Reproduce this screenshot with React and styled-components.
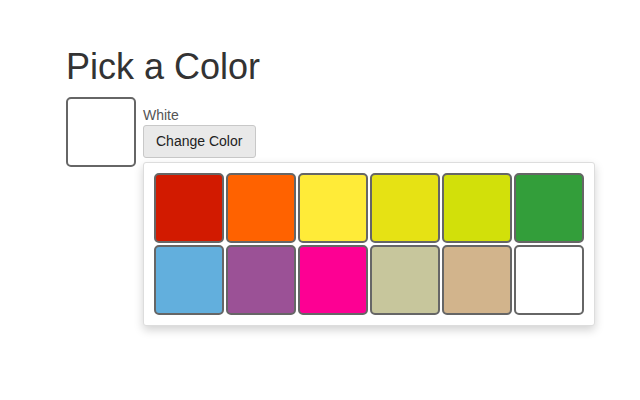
import React from "react";
import styled, { createGlobalStyle } from "styled-components";

const Global = createGlobalStyle`
  html, body { margin: 0; padding: 0; background: #fff; }
  body { font-family: "Liberation Sans", Arial, sans-serif; color: #333; min-height: 400px; }
`;

const Page = styled.div`
  padding: 46px 0 0 66px;
`;

const Title = styled.h1`
  margin: 0;
  font-size: 36px;
  font-weight: 400;
  line-height: 41px;
  color: #333;
`;

const Row = styled.div`
  display: flex;
  align-items: flex-start;
  gap: 7px;
  margin-top: 10px;
`;

const Preview = styled.div`
  width: 66px;
  height: 66px;
  border: 2px solid #666;
  border-radius: 5px;
  background: ${(p) => p.$color};
  flex: none;
`;

const Side = styled.div`
  display: flex;
  flex-direction: column;
  align-items: flex-start;
  padding-top: 10px;
`;

const Label = styled.div`
  font-size: 14px;
  line-height: 16px;
  color: #555;
  margin-bottom: 2px;
`;

const Button = styled.button`
  font-family: "Liberation Sans", Arial, sans-serif;
  font-size: 14px;
  line-height: 17px;
  color: #222;
  background: #e9e9e9;
  border: 1px solid #c8c8c8;
  border-radius: 3px;
  padding: 7px 13px 7px 12px;
  cursor: pointer;
`;

const Popover = styled.div`
  margin-top: 4px;
  background: #fff;
  border: 1px solid #ddd;
  border-radius: 3px;
  box-shadow: 0 4px 10px rgba(0, 0, 0, 0.18);
  padding: 10px;
  display: grid;
  grid-template-columns: repeat(6, 70px);
  gap: 2px;
`;

const Swatch = styled.div`
  width: 66px;
  height: 66px;
  border: 2px solid #666;
  border-radius: 5px;
  background: ${(p) => p.$color};
`;

const colors = [
  "#d21a00",
  "#ff6200",
  "#ffeb38",
  "#e6e214",
  "#d2e00a",
  "#339e3a",
  "#62afdd",
  "#9b5196",
  "#fd0093",
  "#c7c69c",
  "#d2b48c",
  "#ffffff",
];

export default function App() {
  return (
    <>
      <Global />
      <Page>
        <Title>Pick a Color</Title>
        <Row>
          <Preview $color="#ffffff" />
          <Side>
            <Label>White</Label>
            <Button>Change Color</Button>
            <Popover>
              {colors.map((c) => (
                <Swatch key={c} $color={c} />
              ))}
            </Popover>
          </Side>
        </Row>
      </Page>
    </>
  );
}
